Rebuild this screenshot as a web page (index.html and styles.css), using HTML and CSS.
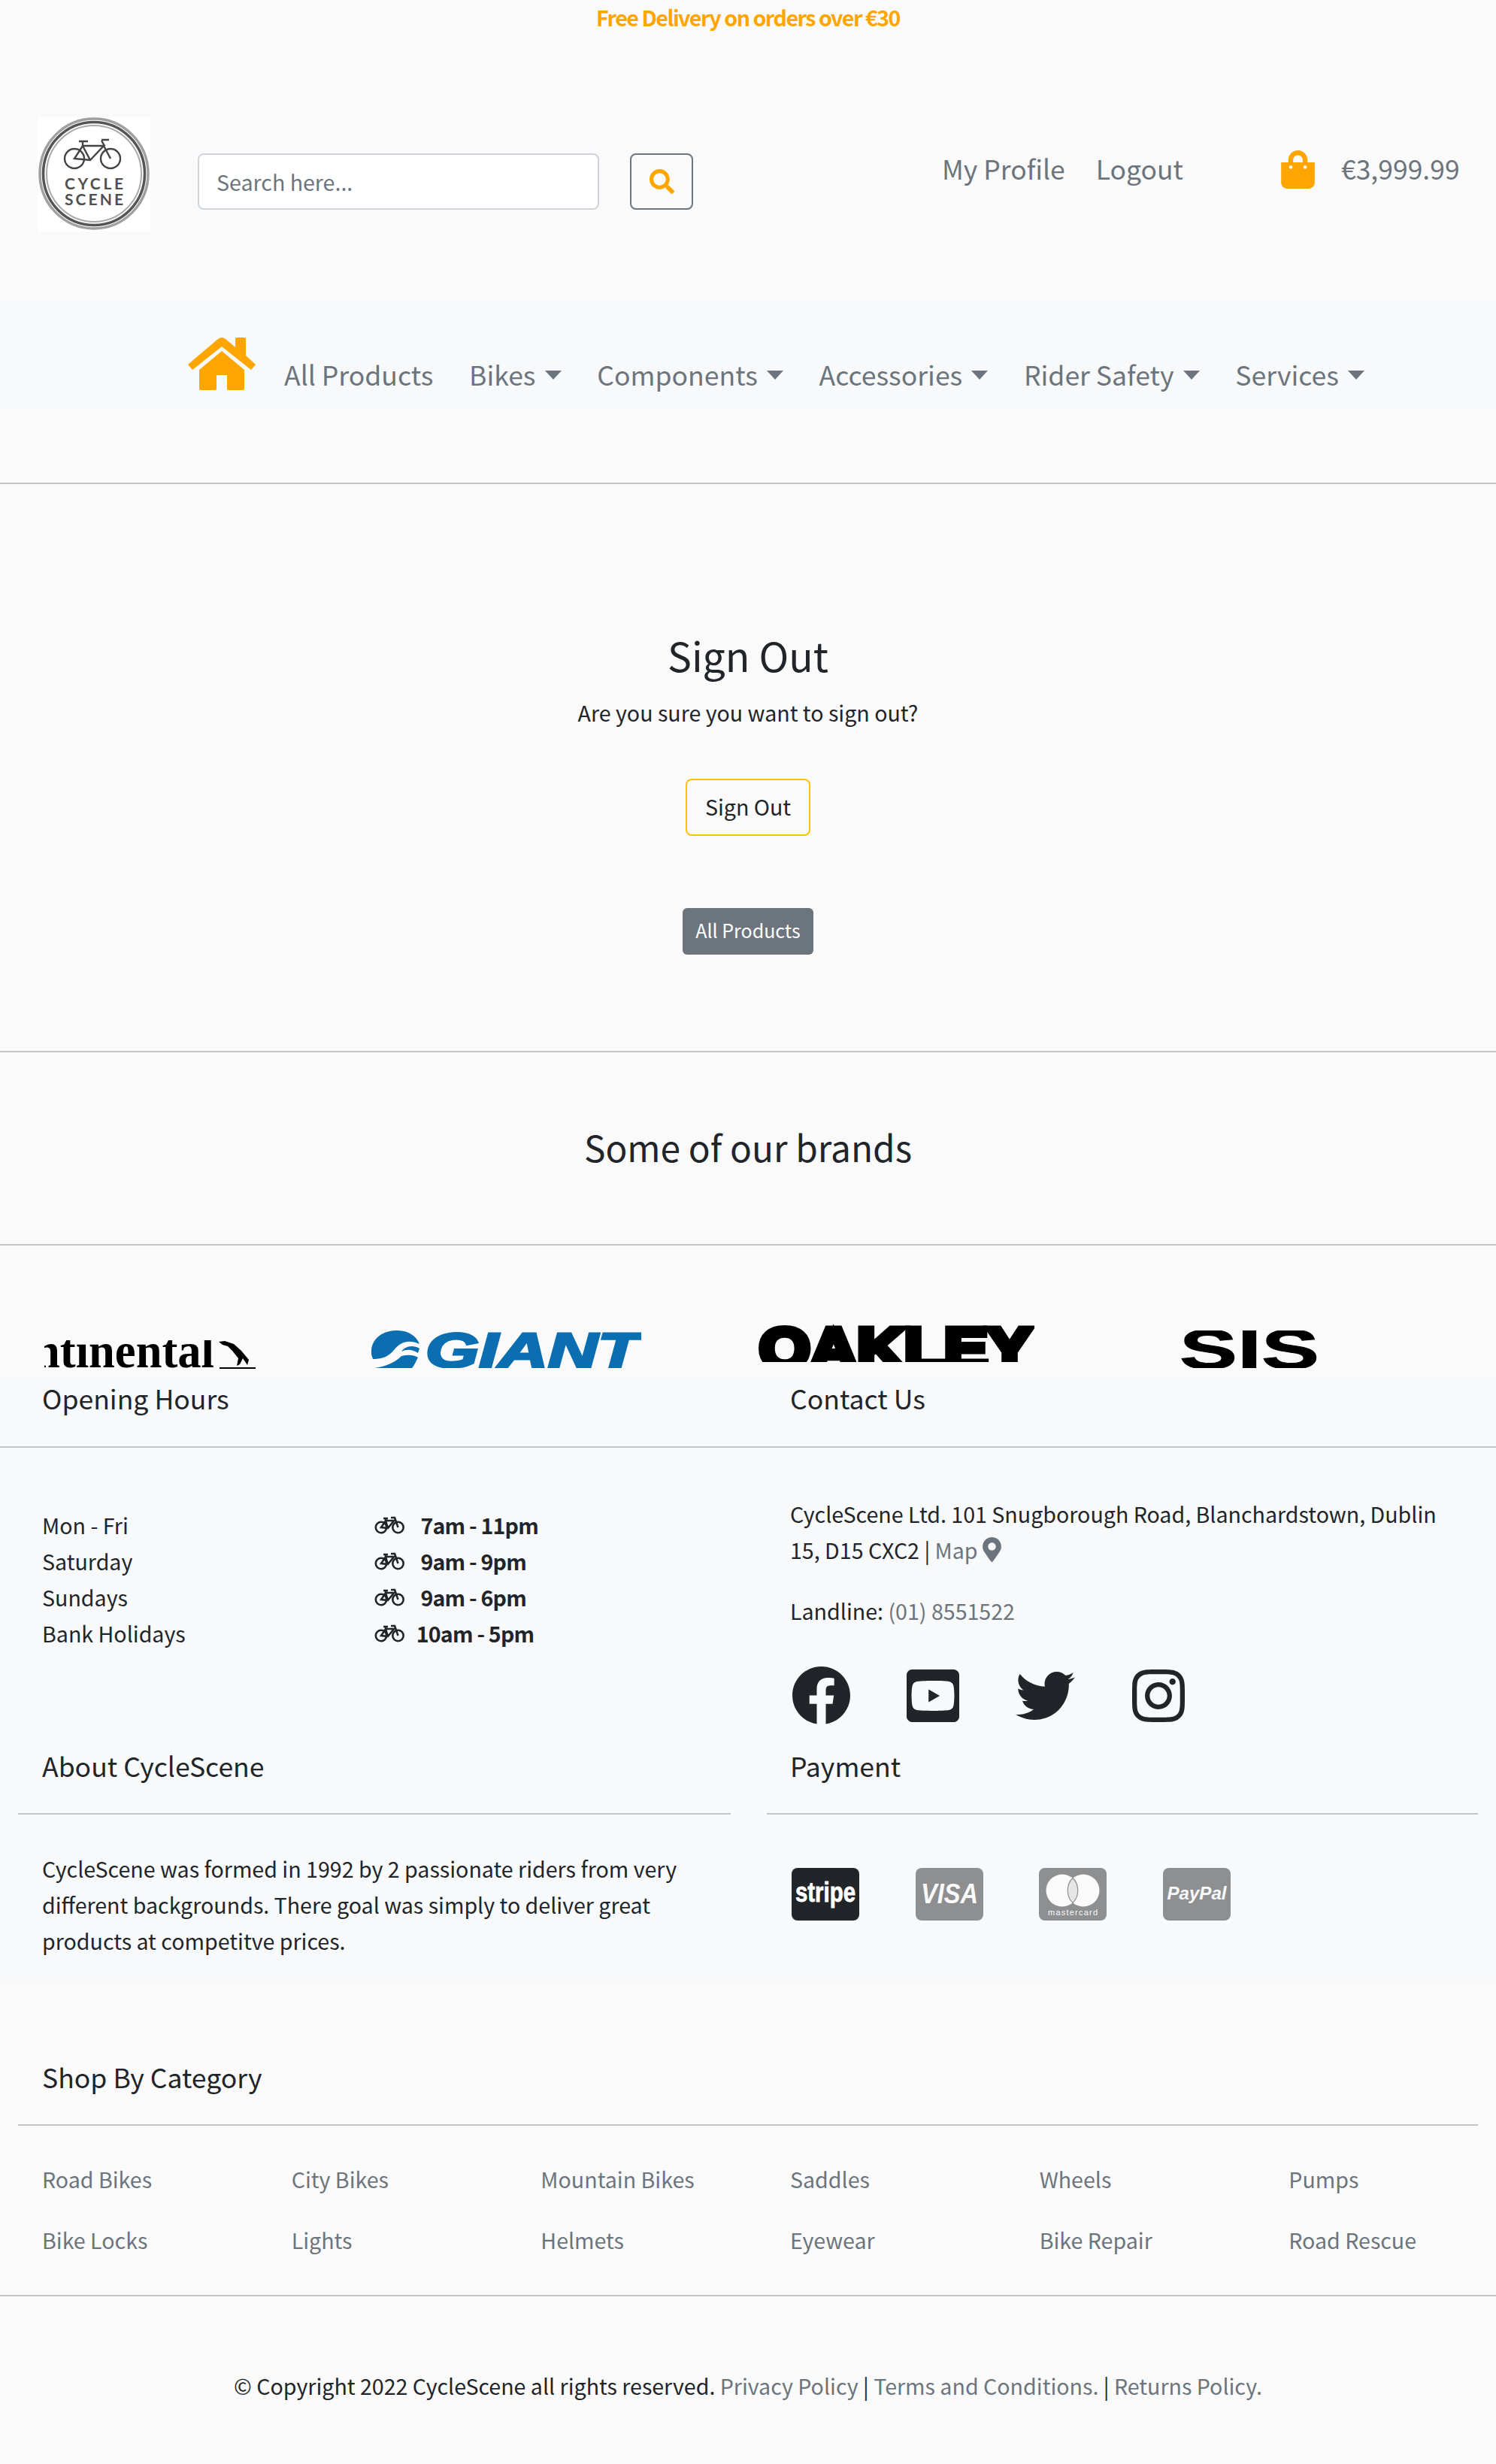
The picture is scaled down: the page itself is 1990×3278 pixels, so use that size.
FILE: index.html
```html
<!DOCTYPE html>
<html lang="en">
<head>
<meta charset="utf-8">
<title>CycleScene - Sign Out</title>
<link rel="stylesheet" href="styles.css">
</head>
<body>
<div class="topbar">Free Delivery on orders over €30</div>

<header class="header">
  <a class="logo" href="#">
    <svg width="150" height="152" viewBox="0 0 150 152">
      <rect width="150" height="152" fill="#fff"/>
      <ellipse cx="75" cy="75" rx="72" ry="73" fill="none" stroke="#a0a0a0" stroke-width="3.500"/>
      <ellipse cx="75" cy="75" rx="67.500" ry="68.500" fill="none" stroke="#555" stroke-width="3.500"/>
      <ellipse cx="75" cy="75" rx="63" ry="64" fill="none" stroke="#aaa" stroke-width="2"/>
      <g fill="none" stroke="#444" stroke-width="2.400">
        <circle cx="49" cy="55" r="13"/>
        <circle cx="97" cy="55" r="13"/>
        <path d="M49 55 L60 38 H88 L70 57 Z M60 38 L70 57 M88 38 L97 55 M55 32 H67 M60 32 V38 M85 31 L89 38 M85 30 H95"/>
      </g>
      <text class="logo-text" x="75" y="96" text-anchor="middle" textLength="78">CYCLE</text>
      <text class="logo-text" x="75" y="117" text-anchor="middle" textLength="78">SCENE</text>
    </svg>
  </a>
  <div class="search">
    <input class="search-input" type="text" placeholder="Search here...">
    <button class="search-btn" type="button" aria-label="Search">
      <svg width="33" height="33" viewBox="0 0 512 512"><path class="fill-orange" d="M505 442.700L405.300 343c-4.500-4.500-10.600-7-17-7H372c27.600-35.300 44-79.700 44-128C416 93.100 322.900 0 208 0S0 93.100 0 208s93.100 208 208 208c48.300 0 92.700-16.400 128-44v16.300c0 6.400 2.500 12.500 7 17l99.700 99.700c9.400 9.400 24.600 9.400 33.900 0l28.300-28.300c9.400-9.400 9.400-24.600.1-34zM208 336c-70.700 0-128-57.200-128-128 0-70.700 57.200-128 128-128 70.700 0 128 57.200 128 128 0 70.700-57.200 128-128 128z"/></svg>
    </button>
  </div>
  <nav class="account">
    <a class="account-link" href="#">My Profile</a>
    <a class="account-link" href="#">Logout</a>
  </nav>
  <a class="cart" href="#">
    <svg width="45" height="51" viewBox="0 0 448 512"><path class="fill-orange" d="M352 160v-32C352 57.420 294.579 0 224 0 153.420 0 96 57.420 96 128v32H0v272c0 44.183 35.817 80 80 80h288c44.183 0 80-35.817 80-80V160h-96zm-192-32c0-35.290 28.710-64 64-64s64 28.710 64 64v32H160v-32zm160 120c-13.255 0-24-10.745-24-24s10.745-24 24-24 24 10.745 24 24-10.745 24-24 24zm-192 0c-13.255 0-24-10.745-24-24s10.745-24 24-24 24 10.745 24 24-10.745 24-24 24z"/></svg>
    <span>€3,999.99</span>
  </a>
</header>

<nav class="mainnav">
  <a class="home" href="#" aria-label="Home">
    <svg width="90" height="71" viewBox="10 8 90 71"><path class="fill-orange" d="M10 45 L50 11 Q55 7 60 11 L73 22 V11 Q73 9 75 9 H85 Q87 9 87 11 V33 L100 45 L94 52 L55 21 L16 52 Z M55 27 L85 52 V77 Q85 79 83 79 H64 Q62 79 62 77 V59 H48 V77 Q48 79 46 79 H27 Q25 79 25 77 V52 Z"/></svg>
  </a>
  <a class="nav-link nav-link-first" href="#">All Products</a>
  <a class="nav-link" href="#">Bikes<i class="caret"></i></a>
  <a class="nav-link" href="#">Components<i class="caret"></i></a>
  <a class="nav-link" href="#">Accessories<i class="caret"></i></a>
  <a class="nav-link" href="#">Rider Safety<i class="caret"></i></a>
  <a class="nav-link" href="#">Services<i class="caret"></i></a>
</nav>
<hr class="rule rule-nav">

<main class="signout">
  <h2 class="signout-title">Sign Out</h2>
  <p class="signout-text">Are you sure you want to sign out?</p>
  <button class="btn-signout" type="button">Sign Out</button>
  <a class="btn-products" href="#">All Products</a>
</main>
<hr class="rule">

<section class="brands-head">
  <h2 class="brands-title">Some of our brands</h2>
</section>
<hr class="rule">

<section class="brands">
  <svg class="brand brand-continental" width="281" height="38" viewBox="0 0 281 38">
    <text class="conti-text" x="-14" y="36" textLength="240" lengthAdjust="spacingAndGlyphs">ntinental</text>
    <rect x="233" y="36" width="48" height="2" fill="#000"/>
    <path d="M232 2 L240 1 L252 5 L262 14 L272 26 L270 33 L264 24 L260 32 L256 34 L258 24 L250 14 L244 8 L237 6 Z" fill="#000"/>
  </svg>
  <svg class="brand brand-giant" width="359" height="50" viewBox="0 0 359 50">
    <path class="fill-giant" d="M0 32 C-2 14 12 0 34 0 C50 0 60 8 64 18 C50 12 40 14 30 26 C22 36 12 38 2 38 Z M64 24 C54 18 44 22 40 28 C48 24 56 26 62 30 Z M4 50 C20 48 32 42 40 34 C48 32 56 32 62 36 C58 44 56 48 54 50 Z"/>
    <text class="giant-text" x="72" y="49" textLength="285" lengthAdjust="spacingAndGlyphs">GIANT</text>
  </svg>
  <svg class="brand brand-oakley" width="370" height="50" viewBox="0 0 370 50">
    <text class="oakley-text" x="4" y="58" textLength="362" lengthAdjust="spacingAndGlyphs">OAKLEY</text>
  </svg>
  <svg class="brand brand-sis" width="188" height="50" viewBox="0 0 188 50">
    <text class="sis-text" x="1" y="51" textLength="186" lengthAdjust="spacingAndGlyphs">SIS</text>
  </svg>
</section>

<footer class="footer">
  <div class="two-col foot-heads">
    <h5 class="foot-title">Opening Hours</h5>
    <h5 class="foot-title">Contact Us</h5>
  </div>
  <hr class="rule">
  <div class="two-col foot-info">
    <div class="hours">
      <span>Mon - Fri</span><strong class="time"><svg class="bike" width="40" height="24" viewBox="0 0 40 24"><use href="#bike"/></svg>&nbsp;&nbsp;7am - 11pm</strong>
      <span>Saturday</span><strong class="time"><svg class="bike" width="40" height="24" viewBox="0 0 40 24"><use href="#bike"/></svg>&nbsp;&nbsp;9am - 9pm</strong>
      <span>Sundays</span><strong class="time"><svg class="bike" width="40" height="24" viewBox="0 0 40 24"><use href="#bike"/></svg>&nbsp;&nbsp;9am - 6pm</strong>
      <span>Bank Holidays</span><strong class="time"><svg class="bike" width="40" height="24" viewBox="0 0 40 24"><use href="#bike"/></svg>&nbsp;10am - 5pm</strong>
    </div>
    <div class="contact">
      <p class="address">CycleScene Ltd. 101 Snugborough Road, Blanchardstown, Dublin 15, D15 CXC2 | <a href="#">Map</a> <svg class="pin" width="25" height="33" viewBox="0 0 384 512"><path class="fill-grey" d="M172.268 501.670C26.970 291.031 0 269.413 0 192 0 85.961 85.961 0 192 0s192 85.961 192 192c0 77.413-26.970 99.031-172.268 309.670-9.535 13.774-29.930 13.773-39.464 0zM192 272c44.183 0 80-35.817 80-80s-35.817-80-80-80-80 35.817-80 80 35.817 80 80 80z"/></svg></p>
      <p class="landline">Landline: <a href="#">(01) 8551522</a></p>
      <div class="social">
        <svg class="soc-fb" width="77" height="77" viewBox="8 8 496 496"><path d="M504 256C504 119 393 8 256 8S8 119 8 256c0 123.780 90.690 226.380 209.250 245V327.690h-63V256h63v-54.640c0-62.150 37-96.480 93.670-96.480 27.140 0 55.520 4.840 55.520 4.840v61h-31.280c-30.800 0-40.410 19.120-40.410 38.730V256h68.780l-11 71.690h-57.780V501C413.310 482.380 504 379.780 504 256z"/></svg>
        <svg class="soc-yt" width="70" height="70" viewBox="0 32 448 448"><path d="M186.800 202.100l95.200 54.100-95.200 54.100V202.100zM448 80v352c0 26.500-21.500 48-48 48H48c-26.500 0-48-21.500-48-48V80c0-26.500 21.500-48 48-48h352c26.500 0 48 21.500 48 48zm-42 176.300s0-59.600-7.600-88.200c-4.200-15.800-16.500-28.200-32.200-32.400C337.900 128 224 128 224 128s-113.900 0-142.200 7.700c-15.700 4.200-28 16.600-32.200 32.400-7.600 28.500-7.600 88.200-7.600 88.200s0 59.600 7.600 88.200c4.200 15.800 16.500 27.700 32.200 31.900C110.100 384 224 384 224 384s113.900 0 142.200-7.700c15.700-4.200 28-16.100 32.200-31.900 7.600-28.500 7.600-88.100 7.600-88.100z"/></svg>
        <svg class="soc-tw" width="79" height="64" viewBox="0 48 512 416"><path d="M459.370 151.716c.325 4.548.325 9.097.325 13.645 0 138.720-105.583 298.558-298.558 298.558-59.452 0-114.680-17.219-161.137-47.106 8.447.974 16.568 1.299 25.340 1.299 49.055 0 94.213-16.568 130.274-44.832-46.132-.975-84.792-31.188-98.112-72.772 6.498.974 12.995 1.624 19.818 1.624 9.421 0 18.843-1.300 27.614-3.573-48.081-9.747-84.143-51.980-84.143-102.985v-1.299c13.969 7.797 30.214 12.670 47.431 13.319-28.264-18.843-46.781-51.005-46.781-87.391 0-19.492 5.197-37.360 14.294-52.954 51.655 63.675 129.300 105.258 216.365 109.807-1.624-7.797-2.599-15.918-2.599-24.040 0-57.828 46.782-104.934 104.934-104.934 30.213 0 57.502 12.670 76.670 33.137 23.715-4.548 46.456-13.320 66.599-25.340-7.798 24.366-24.366 44.833-46.132 57.827 21.117-2.273 41.584-8.122 60.426-16.243-14.292 20.791-32.161 39.308-52.628 54.253z"/></svg>
        <svg class="soc-ig" width="70" height="70" viewBox="0 32 448 448"><path d="M224.100 141c-63.600 0-114.900 51.300-114.900 114.900s51.300 114.900 114.900 114.900S339 319.500 339 255.900 287.700 141 224.100 141zm0 189.600c-41.100 0-74.700-33.500-74.700-74.700s33.500-74.700 74.700-74.700 74.700 33.500 74.700 74.700-33.600 74.700-74.700 74.700zm146.400-194.300c0 14.900-12 26.800-26.800 26.800-14.900 0-26.800-12-26.800-26.800s12-26.800 26.800-26.800 26.800 12 26.800 26.800zm76.100 27.200c-1.700-35.900-9.900-67.700-36.200-93.900-26.200-26.200-58-34.400-93.900-36.200-37-2.100-147.900-2.100-184.900 0-35.800 1.700-67.600 9.900-93.900 36.100s-34.400 58-36.200 93.900c-2.100 37-2.100 147.900 0 184.900 1.700 35.900 9.900 67.700 36.200 93.900s58 34.400 93.900 36.200c37 2.100 147.900 2.100 184.900 0 35.900-1.700 67.700-9.900 93.900-36.200 26.200-26.200 34.400-58 36.200-93.900 2.100-37 2.100-147.800 0-184.800zM398.800 388c-7.800 19.600-22.900 34.700-42.600 42.600-29.500 11.700-99.500 9-132.100 9s-102.700 2.600-132.100-9c-19.600-7.800-34.700-22.900-42.600-42.600-11.700-29.500-9-99.500-9-132.100s-2.600-102.700 9-132.100c7.800-19.600 22.900-34.700 42.600-42.600 29.500-11.700 99.500-9 132.100-9s102.700-2.600 132.100 9c19.600 7.800 34.700 22.900 42.600 42.600 11.700 29.500 9 99.500 9 132.100s2.700 102.700-9 132.100z"/></svg>
      </div>
    </div>
  </div>
  <div class="two-col foot-heads-2">
    <div class="foot-col">
      <h5 class="foot-title">About CycleScene</h5>
      <hr class="rule rule-part">
      <p class="about">CycleScene was formed in 1992 by 2 passionate riders from very different backgrounds. There goal was simply to deliver great products at competitve prices.</p>
    </div>
    <div class="foot-col foot-col-right">
      <h5 class="foot-title">Payment</h5>
      <hr class="rule rule-part">
      <div class="pay">
        <svg width="90" height="70" viewBox="0 0 90 70"><rect width="90" height="70" rx="8" fill="#212529"/><text class="pay-stripe" x="45" y="45" text-anchor="middle" textLength="80" lengthAdjust="spacingAndGlyphs">stripe</text></svg>
        <svg width="90" height="70" viewBox="0 0 90 70"><rect width="90" height="70" rx="8" fill="#8e8f91"/><text class="pay-visa" x="45" y="47" text-anchor="middle" textLength="76" lengthAdjust="spacingAndGlyphs">VISA</text></svg>
        <svg width="90" height="70" viewBox="0 0 90 70"><rect width="90" height="70" rx="8" fill="#8e8f91"/><circle cx="31" cy="30" r="21.500" fill="#fafafa"/><circle cx="59" cy="30" r="21.500" fill="#fafafa"/><path d="M45 13.500 C36 22 36 38 45 46.500 C54 38 54 22 45 13.500 Z" fill="#e6e6e6" stroke="#8e8f91" stroke-width="1.200"/><text class="pay-mc" x="45" y="63" text-anchor="middle" textLength="66">mastercard</text></svg>
        <svg width="90" height="70" viewBox="0 0 90 70"><rect width="90" height="70" rx="8" fill="#8e8f91"/><text class="pay-pp" x="45" y="42" text-anchor="middle" textLength="79" lengthAdjust="spacingAndGlyphs">PayPal</text></svg>
      </div>
    </div>
  </div>
</footer>

<section class="shop">
  <h5 class="foot-title">Shop By Category</h5>
  <hr class="rule rule-shop">
  <div class="shop-grid">
    <a href="#">Road Bikes</a><a href="#">City Bikes</a><a href="#">Mountain Bikes</a><a href="#">Saddles</a><a href="#">Wheels</a><a href="#">Pumps</a>
    <a href="#">Bike Locks</a><a href="#">Lights</a><a href="#">Helmets</a><a href="#">Eyewear</a><a href="#">Bike Repair</a><a href="#">Road Rescue</a>
  </div>
</section>
<hr class="rule">
<p class="copyright">© Copyright 2022 CycleScene all rights reserved. <a href="#">Privacy Policy</a> | <a href="#">Terms and Conditions.</a> | <a href="#">Returns Policy.</a></p>

<svg class="defs" width="0" height="0">
  <symbol id="bike" viewBox="0 0 40 24">
    <g fill="none" stroke="#212529" stroke-width="2.600">
      <circle cx="9" cy="15" r="7.200"/>
      <circle cx="31.500" cy="15" r="7.200"/>
      <path d="M9 15 L15 6 H26 L18 16 Z M15 6 L18 16 M22 2 H27 L31.500 15 M12 3 H18 M15 3 V6"/>
    </g>
  </symbol>
</svg>
</body>
</html>
```
FILE: styles.css
```css
* { box-sizing: border-box; }
html, body { margin: 0; padding: 0; }
body {
  background: #fafafa;
  color: #212529;
  font-family: "Noto Sans CJK SC", "Noto Sans", sans-serif;
  font-size: 28.600px;
  line-height: 48px;
}
a { color: #6c757d; text-decoration: none; }
h2, h5, p { margin: 0; font-weight: 400; }
.fill-orange { fill: #ffa500; }
.fill-grey { fill: #6c757d; }
.fill-giant { fill: #0a6eb0; }
.defs { position: absolute; }

.rule { display: block; margin: 0; border: 0; height: 2px; background: #c4c5c7; }

.topbar {
  height: 50px;
  line-height: 46px;
  text-align: center;
  color: #ffa500;
  font-weight: 700;
  letter-spacing: -1.500px;
}

.header { display: flex; align-items: flex-start; height: 350px; padding: 106px 0 0 50px; }
.logo { display: block; width: 150px; height: 152px; }
.logo-text { font-family: "Lato", sans-serif; font-weight: 700; font-size: 21px; fill: #505050; }
.search { display: flex; margin: 48px 0 0 63px; }
.search-input {
  width: 534px;
  height: 75px;
  border: 2px solid #ced4da;
  border-radius: 8px;
  background: #fff;
  padding: 0 23px;
  font: inherit;
  color: #212529;
}
.search-input::placeholder { color: #6c757d; opacity: 1; }
.search-btn {
  width: 84px;
  height: 75px;
  margin-left: 41px;
  display: flex;
  align-items: center;
  justify-content: center;
  background: transparent;
  border: 2px solid #6c757d;
  border-radius: 8px;
  padding: 0;
}
.account { display: flex; gap: 41px; margin: 43px 0 0 331px; }
.account-link { font-size: 35.500px; line-height: 50px; }
.cart { display: flex; align-items: flex-start; gap: 35px; margin: 44px 0 0 130px; font-size: 35.500px; line-height: 48px; }

.mainnav { display: flex; align-items: flex-start; height: 147px; padding: 48px 0 0 250px; background: #f8f9fa; }
.home { display: block; height: 71px; }
.nav-link { display: flex; align-items: center; margin: 25px 0 0 47.700px; font-size: 35.600px; line-height: 50px; }
.nav-link-first { margin-left: 38px; }
.caret {
  display: block;
  margin: 2px 0 0 12px;
  width: 0;
  height: 0;
  border-left: 11px solid transparent;
  border-right: 11px solid transparent;
  border-top: 12px solid #6c757d;
}
.rule-nav { margin-top: 95px; }

.signout { display: flex; flex-direction: column; align-items: center; height: 754px; padding-top: 192px; }
.signout-title { font-size: 53.600px; line-height: 70px; }
.signout-text { margin-top: 18px; }
.btn-signout {
  margin-top: 64px;
  width: 166px;
  height: 76px;
  border: 2px solid #ffc107;
  border-radius: 8px;
  background: transparent;
  font: inherit;
  color: #212529;
  padding: 0 0 2px;
}
.btn-products {
  margin-top: 96px;
  width: 174px;
  height: 62px;
  line-height: 58px;
  text-align: center;
  background: #6c757d;
  border-radius: 6px;
  color: #fff;
  font-size: 25px;
}

.brands-head { text-align: center; height: 255px; padding-top: 91px; }
.brands-title { font-size: 47.800px; line-height: 70px; }

.brands { display: flex; align-items: flex-start; height: 175px; padding-top: 105px; }
.brand { display: block; flex: none; overflow: hidden; }
.brand-continental { margin: 21px 0 0 59px; }
.brand-giant { margin: 8px 0 0 154px; }
.brand-oakley { margin: 0 0 0 153px; }
.brand-sis { margin: 8px 0 0 192px; }
.conti-text { font-family: "Liberation Serif", serif; font-weight: 700; font-size: 66px; fill: #000; }
.giant-text { font-family: "Liberation Sans", sans-serif; font-weight: 700; font-style: italic; font-size: 64px; fill: #0a6eb0; stroke: #0a6eb0; stroke-width: 3px; }
.oakley-text { font-family: "Liberation Sans", sans-serif; font-weight: 700; font-size: 76px; fill: #000; stroke: #000; stroke-width: 8px; }
.sis-text { font-family: "Liberation Sans", sans-serif; font-weight: 700; font-size: 74px; fill: #000; stroke: #000; stroke-width: 1px; }

.footer { background: #f8f9fa; height: 805px; }
.two-col { display: grid; grid-template-columns: 995px 995px; }
.foot-heads { height: 92px; padding-top: 3px; }
.foot-heads .foot-title { padding-left: 56px; }
.foot-title { font-size: 35.600px; line-height: 50px; }
.foot-info { height: 398px; }
.hours {
  display: grid;
  grid-template-columns: 442px 1fr;
  align-content: start;
  padding: 79px 0 0 56px;
}
.time { font-weight: 700; display: flex; align-items: center; white-space: pre; letter-spacing: -.800px; }
.bike { flex: none; margin-right: 10px; }
.contact { padding: 64px 56px 0 56px; }
.address a, .landline a { color: #6c757d; }
.pin { vertical-align: -4px; }
.landline { margin-top: 33px; }
.social { display: flex; align-items: center; margin-top: 50px; padding-left: 3px; }
.social svg { display: block; flex: none; fill: #212529; }
.soc-yt { margin-left: 75px; }
.soc-tw { margin-left: 75px; }
.soc-ig { margin-left: 76px; }
.foot-col { padding: 0 23px 0 24px; }
.foot-col-right { padding: 0 24px 0 25px; }
.foot-col .foot-title { padding-left: 32px; }
.foot-col-right .foot-title { padding-left: 31px; }
.rule-part { margin-top: 38px; }
.about { margin-top: 48px; padding: 0 32px; }
.pay { display: flex; gap: 74.500px; margin-top: 71px; padding-left: 33px; }
.pay svg { display: block; flex: none; }
.pay-stripe { font-family: "Liberation Sans", sans-serif; font-weight: 700; font-size: 36px; fill: #fff; stroke: #fff; stroke-width: .8px; }
.pay-visa { font-family: "Liberation Sans", sans-serif; font-weight: 700; font-style: italic; font-size: 36px; fill: #fafafa; }
.pay-mc { font-family: "Liberation Sans", sans-serif; font-size: 11px; fill: #fafafa; }
.pay-pp { font-family: "Liberation Sans", sans-serif; font-weight: 700; font-style: italic; font-size: 24px; fill: #fafafa; }

.shop { height: 416px; padding: 101px 24px 0; }
.shop .foot-title { padding-left: 32px; }
.rule-shop { margin-top: 38px; }
.shop-grid {
  display: grid;
  grid-template-columns: repeat(6, 331.670px);
  row-gap: 33px;
  padding: 47px 0 0 32px;
}
.copyright { padding-top: 95px; height: 223px; text-align: center; }
```
